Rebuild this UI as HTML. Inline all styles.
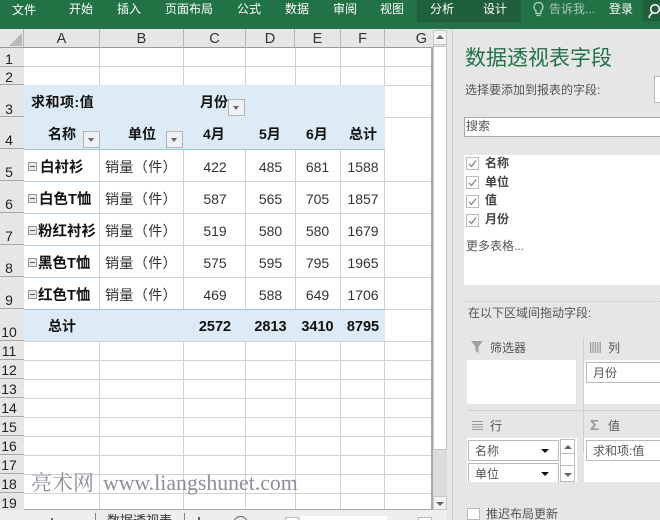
<!DOCTYPE html>
<html lang="zh"><head><meta charset="utf-8">
<style>
html,body{margin:0;padding:0;width:660px;height:520px;overflow:hidden}
body{position:relative;background:#fff;font-family:"Liberation Sans","Noto Sans CJK SC",sans-serif;color:#222}
div{position:absolute;box-sizing:border-box}
.t{white-space:nowrap;line-height:1}
.r{color:#fff;font-size:12px;top:4px}
.ch{top:29px;height:19px;text-align:center;font-size:14.500px;line-height:20px;color:#333;border-right:1px solid #b5b5b5;border-bottom:1px solid #9a9a9a}
.rh{left:0;width:24px;padding-right:6px;text-align:center;font-size:14px;color:#222;border-bottom:1px solid #a8a8a8;background:#e6e6e6;line-height:16px}
.vl{top:48px;width:1px;height:461px;background:#d0d0d0}
.hl{left:24px;width:407px;height:1px;background:#d4d4d4}
.b{font-weight:bold;font-size:14px;color:#111}
.l{font-weight:bold;font-size:14.500px;color:#111}
.s{font-size:14px;color:#333;letter-spacing:.4px}
.num{text-align:center;font-size:14px;color:#333;line-height:16px}
.tot{text-align:center;font-size:14.500px;font-weight:bold;color:#111;line-height:16px}
.dd{width:17px;height:17px;background:#eef1f5;border:1px solid #b4b4b4}
.dd:after{content:"";position:absolute;left:4px;top:6px;border:3.500px solid transparent;border-top:4px solid #666}
.mn{left:28px;width:9px;height:9px;border:1px solid #8a96a3;background:#e9ebee;border-radius:1px}
.mn:after{content:"";position:absolute;left:1px;top:3px;width:5px;height:1px;background:#555}
.p{font-size:12px;color:#555}
.cb{left:466px;width:13px;height:13px;border:1px solid #bbb;background:#fff}
.cb svg{position:absolute;left:0;top:0}
.fb{font-size:12px;font-weight:bold;color:#444;left:485px}
.box{background:#fff;border:1px solid #b9b9b9;font-size:12px;color:#555;padding-left:6px;line-height:20px;white-space:nowrap}
.tri{width:0;height:0;border:4px solid transparent;border-top:4px solid #111}
</style></head><body>
<div style="left:0;top:0;width:660px;height:520px;overflow:hidden">

<div style="left:0;top:0;width:660px;height:29px;background:#217346"></div>
<div style="left:417px;top:0;width:104px;height:22px;background:#1f5f3b"></div>
<div style="left:643px;top:0;width:17px;height:21px;background:#1f5f3b"></div>
<div class="t r" style="left:12px;top:4px">文件</div>
<div class="t r" style="left:69px;top:3px">开始</div>
<div class="t r" style="left:117px;top:3px">插入</div>
<div class="t r" style="left:165px;top:3px">页面布局</div>
<div class="t r" style="left:237px;top:3px">公式</div>
<div class="t r" style="left:285px;top:3px">数据</div>
<div class="t r" style="left:333px;top:3px">审阅</div>
<div class="t r" style="left:380px;top:3px">视图</div>
<div class="t r" style="left:430px;top:3px">分析</div>
<div class="t r" style="left:483px;top:3px">设计</div>
<svg style="position:absolute;left:532px;top:1px" width="13" height="17" viewBox="0 0 13 17" fill="none" stroke="#b9cfc2" stroke-width="1.300"><path d="M6.500 1.500a4.500 4.500 0 0 0-2.500 8.200v2.800h5v-2.800a4.500 4.500 0 0 0-2.500-8.200zM4.500 14.500h4"/></svg>
<div class="t r" style="left:549px;top:3px;color:#a9c6b4">告诉我...</div>
<div class="t r" style="left:609px;top:3px">登录</div>
<svg style="position:absolute;left:648px;top:3px" width="12" height="16" viewBox="0 0 12 16" fill="none" stroke="#fff" stroke-width="1.500"><circle cx="7" cy="6" r="4.300"/><path d="M1 15c.5-3 2-4.500 4-5"/></svg>

<div style="left:0;top:29px;width:452px;height:491px;background:#e6e6e6"></div>
<div style="left:24px;top:48px;width:407px;height:461px;background:#fff"></div>

<div style="left:0;top:29px;width:24px;height:19px;background:#e6e6e6;border-right:1px solid #b5b5b5;border-bottom:1px solid #9a9a9a"></div>
<svg style="position:absolute;left:8px;top:33px" width="14" height="13"><path d="M14 0V13H1z" fill="#b8b8b8"/></svg>
<div class="ch" style="left:24px;width:76px">A</div>
<div class="ch" style="left:100px;width:84px">B</div>
<div class="ch" style="left:184px;width:62px">C</div>
<div class="ch" style="left:246px;width:49px">D</div>
<div class="ch" style="left:295px;width:46px">E</div>
<div class="ch" style="left:341px;width:44px">F</div>
<div class="ch" style="left:385px;width:46px;border-right:0;text-align:right;padding-right:4px">G</div>

<div class="rh" style="top:48px;height:19px;padding-top:3px">1</div>
<div class="rh" style="top:67px;height:18px;padding-top:2px">2</div>
<div class="rh" style="top:85px;height:32px;padding-top:16px">3</div>
<div class="rh" style="top:117px;height:32px;padding-top:15px">4</div>
<div class="rh" style="top:149px;height:32px;padding-top:15px">5</div>
<div class="rh" style="top:181px;height:32px;padding-top:15px">6</div>
<div class="rh" style="top:213px;height:32px;padding-top:15px">7</div>
<div class="rh" style="top:245px;height:32px;padding-top:15px">8</div>
<div class="rh" style="top:277px;height:32px;padding-top:15px">9</div>
<div class="rh" style="top:309px;height:32px;padding-top:15px">10</div>
<div class="rh" style="top:341px;height:19px;padding-top:2px">11</div>
<div class="rh" style="top:360px;height:19px;padding-top:2px">12</div>
<div class="rh" style="top:379px;height:19px;padding-top:2px">13</div>
<div class="rh" style="top:398px;height:19px;padding-top:2px">14</div>
<div class="rh" style="top:417px;height:19px;padding-top:2px">15</div>
<div class="rh" style="top:436px;height:19px;padding-top:2px">16</div>
<div class="rh" style="top:455px;height:19px;padding-top:2px">17</div>
<div class="rh" style="top:474px;height:19px;padding-top:2px">18</div>
<div class="rh" style="top:493px;height:16px;padding-top:2px;border-bottom:0">19</div>

<div class="vl" style="left:99px"></div><div class="vl" style="left:183px"></div><div class="vl" style="left:245px"></div><div class="vl" style="left:295px"></div><div class="vl" style="left:340px"></div><div class="vl" style="left:384px"></div>
<div class="hl" style="top:66px"></div><div class="hl" style="top:85px"></div><div class="hl" style="top:117px"></div><div class="hl" style="top:181px"></div><div class="hl" style="top:213px"></div><div class="hl" style="top:245px"></div><div class="hl" style="top:277px"></div><div class="hl" style="top:309px"></div><div class="hl" style="top:341px"></div><div class="hl" style="top:360px"></div><div class="hl" style="top:379px"></div><div class="hl" style="top:398px"></div><div class="hl" style="top:417px"></div><div class="hl" style="top:436px"></div><div class="hl" style="top:455px"></div><div class="hl" style="top:474px"></div><div class="hl" style="top:493px"></div>

<div style="left:24px;top:85px;width:361px;height:64px;background:#ddebf7"></div>
<div style="left:24px;top:149px;width:361px;height:1px;background:#9dc3e6"></div>
<div style="left:24px;top:309px;width:361px;height:32px;background:#ddebf7;border-top:1px solid #9dc3e6"></div>
<div style="left:24px;top:181px;width:76px;height:1px;background:#b5d0e8"></div>
<div style="left:24px;top:213px;width:76px;height:1px;background:#b5d0e8"></div>
<div style="left:24px;top:245px;width:76px;height:1px;background:#b5d0e8"></div>
<div style="left:24px;top:277px;width:76px;height:1px;background:#b5d0e8"></div>

<div class="t b" style="left:31px;top:95px;letter-spacing:.5px">求和项:值</div>
<div class="t b" style="left:200px;top:95px">月份</div>
<div class="dd" style="left:228px;top:99px"></div>
<div class="t b" style="left:48px;top:127px">名称</div>
<div class="dd" style="left:83px;top:131px"></div>
<div class="t b" style="left:128px;top:127px">单位</div>
<div class="dd" style="left:166px;top:131px"></div>
<div class="t b" style="left:203px;top:127px">4月</div>
<div class="t b" style="left:259px;top:127px">5月</div>
<div class="t b" style="left:306px;top:127px">6月</div>
<div class="t b" style="left:349px;top:127px">总计</div>

<div class="mn" style="top:162px"></div><div class="t l" style="left:40px;top:161px">白衬衫</div>
<div class="mn" style="top:194px"></div><div class="t l" style="left:39px;top:193px">白色T恤</div>
<div class="mn" style="top:226px"></div><div class="t l" style="left:38px;top:225px">粉红衬衫</div>
<div class="mn" style="top:258px"></div><div class="t l" style="left:38px;top:257px">黑色T恤</div>
<div class="mn" style="top:290px"></div><div class="t l" style="left:38px;top:289px">红色T恤</div>
<div class="t s" style="left:105px;top:160px">销量（件）</div>
<div class="t s" style="left:105px;top:192px">销量（件）</div>
<div class="t s" style="left:105px;top:224px">销量（件）</div>
<div class="t s" style="left:105px;top:256px">销量（件）</div>
<div class="t s" style="left:105px;top:288px">销量（件）</div>

<div class="num" style="left:184px;top:159px;width:62px">422</div><div class="num" style="left:246px;top:159px;width:49px">485</div><div class="num" style="left:295px;top:159px;width:45px">681</div><div class="num" style="left:341px;top:159px;width:44px">1588</div>
<div class="num" style="left:184px;top:191px;width:62px">587</div><div class="num" style="left:246px;top:191px;width:49px">565</div><div class="num" style="left:295px;top:191px;width:45px">705</div><div class="num" style="left:341px;top:191px;width:44px">1857</div>
<div class="num" style="left:184px;top:223px;width:62px">519</div><div class="num" style="left:246px;top:223px;width:49px">580</div><div class="num" style="left:295px;top:223px;width:45px">580</div><div class="num" style="left:341px;top:223px;width:44px">1679</div>
<div class="num" style="left:184px;top:255px;width:62px">575</div><div class="num" style="left:246px;top:255px;width:49px">595</div><div class="num" style="left:295px;top:255px;width:45px">795</div><div class="num" style="left:341px;top:255px;width:44px">1965</div>
<div class="num" style="left:184px;top:287px;width:62px">469</div><div class="num" style="left:246px;top:287px;width:49px">588</div><div class="num" style="left:295px;top:287px;width:45px">649</div><div class="num" style="left:341px;top:287px;width:44px">1706</div>

<div class="t b" style="left:48px;top:319px">总计</div>
<div class="tot" style="left:184px;top:319px;width:62px">2572</div><div class="tot" style="left:246px;top:319px;width:49px">2813</div><div class="tot" style="left:295px;top:319px;width:45px">3410</div><div class="tot" style="left:341px;top:319px;width:44px">8795</div>

<div class="t" style="left:31px;top:473px;font-family:'Liberation Serif','Noto Serif CJK SC',serif;font-size:21px;color:#8a8f98">亮术网</div>
<div class="t" style="left:103px;top:473px;font-family:'Liberation Serif',serif;font-size:21.800px;color:#8a8f98">www.liangshunet.com</div>

<div style="left:431px;top:47px;width:2px;height:463px;background:#a8a8a8"></div>
<div style="left:24px;top:509px;width:408px;height:1px;background:#a8a8a8"></div>
<div style="left:433px;top:30px;width:14px;height:480px;background:#dcdcdc"></div>
<div style="left:433px;top:30px;width:14px;height:15px;background:#f2f2f2;border:1px solid #c8c8c8"></div>
<div style="left:436px;top:35px;border:4px solid transparent;border-bottom:4px solid #666;border-top:0"></div>
<div style="left:433px;top:46px;width:14px;height:404px;background:#fff;border:1px solid #c8c8c8"></div>
<div style="left:433px;top:496px;width:14px;height:14px;background:#f2f2f2;border:1px solid #c8c8c8"></div>
<div style="left:436px;top:502px;border:4px solid transparent;border-top:4px solid #666;border-bottom:0"></div>

<div style="left:0;top:510px;width:452px;height:10px;background:#eeeeee"></div>
<div style="left:95px;top:513px;width:1px;height:7px;background:#888"></div>
<div style="left:184px;top:513px;width:1px;height:7px;background:#888"></div>
<div class="t" style="left:107px;top:514px;font-size:13px;color:#333">数据透视表</div>
<div style="left:51px;top:518px;width:2px;height:2px;background:#666"></div>
<div style="left:198px;top:517px;width:2px;height:3px;background:#666"></div>
<div style="left:233px;top:516px;width:15px;height:15px;border:1.500px solid #666;border-radius:50%"></div>
<div style="left:285px;top:517px;width:14px;height:3px;background:#fff;border:1px solid #bbb;border-bottom:0"></div>
<div style="left:301px;top:516px;width:86px;height:4px;background:#fff"></div>
<div style="left:418px;top:517px;width:14px;height:3px;background:#fff;border:1px solid #bbb;border-bottom:0"></div>

<div style="left:447px;top:29px;width:213px;height:491px;background:#e6e6e6"></div>
<div style="left:452px;top:29px;width:1px;height:491px;background:#cccccc"></div>
<div class="t" style="left:465px;top:48px;font-size:21px;color:#217346">数据透视表字段</div>
<div class="t p" style="left:465px;top:84px">选择要添加到报表的字段:</div>
<div style="left:654px;top:76px;width:6px;height:27px;background:#fff;border:1px solid #bbb;border-right:0"></div>
<div style="left:464px;top:117px;width:196px;height:20px;background:#fff;border:1px solid #aaa;border-right:0"></div>
<div class="t p" style="left:466px;top:120px">搜索</div>

<div style="left:464px;top:155px;width:196px;height:130px;background:#fff"></div>
<div class="cb" style="top:157px"><svg width="11" height="11" fill="none" stroke="#888" stroke-width="1.300"><path d="M2 6l2.500 2.500L9 2.500"/></svg></div>
<div class="cb" style="top:176px"><svg width="11" height="11" fill="none" stroke="#888" stroke-width="1.300"><path d="M2 6l2.500 2.500L9 2.500"/></svg></div>
<div class="cb" style="top:195px"><svg width="11" height="11" fill="none" stroke="#888" stroke-width="1.300"><path d="M2 6l2.500 2.500L9 2.500"/></svg></div>
<div class="cb" style="top:214px"><svg width="11" height="11" fill="none" stroke="#888" stroke-width="1.300"><path d="M2 6l2.500 2.500L9 2.500"/></svg></div>
<div class="t fb" style="top:157px">名称</div>
<div class="t fb" style="top:176px">单位</div>
<div class="t fb" style="top:194px">值</div>
<div class="t fb" style="top:213px">月份</div>
<div class="t p" style="left:466px;top:240px">更多表格...</div>

<div style="left:465px;top:301px;width:195px;border-top:1px dotted #c8c8c8"></div>
<div class="t p" style="left:468px;top:307px">在以下区域间拖动字段:</div>

<svg style="position:absolute;left:471px;top:341px" width="13" height="12"><path d="M0 0H12L7.500 5.500V12L4.500 10V5.500Z" fill="#a0a0a0"/></svg>
<div class="t p" style="left:490px;top:342px">筛选器</div>
<svg style="position:absolute;left:590px;top:342px" width="11" height="11"><path d="M.6 0V11M3 0V11M5.400 0V11M7.800 0V11M10.200 0V11" stroke="#999" stroke-width="1.200"/></svg>
<div class="t p" style="left:608px;top:342px">列</div>
<div style="left:467px;top:360px;width:109px;height:44px;background:#fff"></div>
<div style="left:583px;top:338px;width:1px;height:114px;background:#cfcfcf"></div>
<div style="left:467px;top:410px;width:193px;height:1px;background:#cfcfcf"></div>
<div style="left:584px;top:360px;width:76px;height:44px;background:#fff"></div>
<div class="box" style="left:586px;top:362px;width:74px;height:21px;border-right:0">月份</div>

<svg style="position:absolute;left:472px;top:421px" width="11" height="9"><path d="M0 .5H11M0 3.500H11M0 6H11M0 8.500H11" stroke="#999" stroke-width="1"/></svg>
<div class="t p" style="left:490px;top:420px">行</div>
<div class="t" style="left:590px;top:418px;font-size:15px;font-weight:bold;color:#999">Σ</div>
<div class="t p" style="left:608px;top:420px">值</div>
<div style="left:467px;top:438px;width:110px;height:44px;background:#fff"></div>
<div style="left:584px;top:438px;width:76px;height:44px;background:#fff"></div>
<div class="box" style="left:468px;top:440px;width:91px;height:21px">名称</div>
<div class="box" style="left:468px;top:463px;width:91px;height:21px;border-bottom:0">单位</div>
<div class="tri" style="left:541px;top:449px"></div>
<div class="tri" style="left:541px;top:472px"></div>
<div style="left:560px;top:439px;width:15px;height:43px;background:#fff;border:1px solid #bbb"></div>
<div style="left:560px;top:453px;width:15px;height:1px;background:#bbb"></div>
<div style="left:560px;top:465px;width:15px;height:1px;background:#bbb"></div>
<div style="left:564px;top:445px;border:4px solid transparent;border-bottom:4px solid #666;border-top:0"></div>
<div style="left:564px;top:473px;border:4px solid transparent;border-top:4px solid #666;border-bottom:0"></div>
<div class="box" style="left:586px;top:440px;width:74px;height:21px;border-right:0">求和项:值</div>
<div style="left:467px;top:482px;width:193px;height:8px;background:#e6e6e6"></div>

<div style="left:467px;top:508px;width:13px;height:12px;background:#fff;border:1px solid #bbb"></div>
<div class="t p" style="left:486px;top:508px">推迟布局更新</div>

</div>
</body></html>
